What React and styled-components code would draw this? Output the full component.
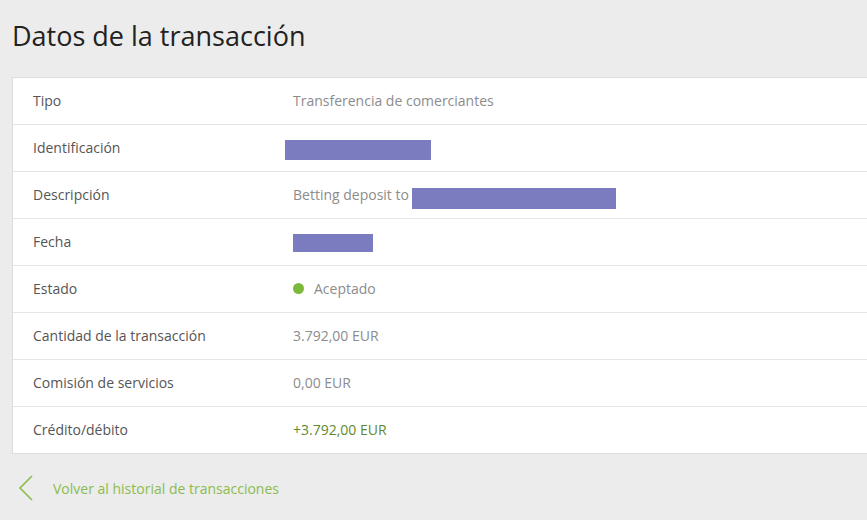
import React from "react";
import styled, { createGlobalStyle } from "styled-components";

const Global = createGlobalStyle`
  html, body { margin: 0; padding: 0; background: #ebeceb; }
  body { font-family: "Open Sans", "Noto Sans", sans-serif; overflow: hidden; }
`;

const Page = styled.div`
  width: 867px;
  height: 520px;
  padding: 0 0 0 12px;
  box-sizing: border-box;
  overflow: hidden;
`;

const Title = styled.h1`
  margin: 0;
  padding: 18px 0 0 0;
  height: 77px;
  box-sizing: border-box;
  font-weight: 400;
  font-size: 27px;
  line-height: 36px;
  color: #222;
`;

const Card = styled.div`
  background: #fff;
  border: 1px solid #dcdddc;
  border-right: none;
  width: 870px;
`;

const Row = styled.div`
  display: grid;
  grid-template-columns: 260px 1fr;
  align-items: center;
  height: 44px;
  padding: 0 0 2px 20px;
  border-top: ${(p) => (p.$first ? "none" : "1px solid #e4e5e6")};
  font-size: 14px;
`;

const Label = styled.div`
  color: #555;
`;

const Value = styled.div`
  display: flex;
  align-items: center;
  color: ${(p) => (p.$green ? "#5e8a2e" : "#8c8c8c")};
`;

const Redact = styled.span`
  display: inline-block;
  background: #7b7bc0;
  width: ${(p) => p.$w}px;
  height: ${(p) => p.$h}px;
  margin-left: ${(p) => p.$ml || 0}px;
  position: relative;
  top: ${(p) => p.$top || 0}px;
`;

const Dot = styled.span`
  width: 11px;
  height: 11px;
  border-radius: 50%;
  background: #7cb93a;
  margin-right: 10px;
`;

const Back = styled.a`
  display: flex;
  align-items: center;
  margin-top: 21px;
  padding-left: 6px;
  color: #8cbc4e;
  font-size: 14px;
  text-decoration: none;
  cursor: pointer;
`;

const Chevron = styled.svg`
  width: 16px;
  height: 26px;
  margin-right: 19px;
`;

const rows = [
  { label: "Tipo", value: "Transferencia de comerciantes" },
  { label: "Identificación", redact: { w: 146, h: 20, ml: -8, top: 3 } },
  { label: "Descripción", value: "Betting deposit to", redact: { w: 204, h: 21, ml: 3, top: 4 } },
  { label: "Fecha", redact: { w: 80, h: 18, top: 2 } },
  { label: "Estado", status: "Aceptado" },
  { label: "Cantidad de la transacción", value: "3.792,00 EUR" },
  { label: "Comisión de servicios", value: "0,00 EUR" },
  { label: "Crédito/débito", value: "+3.792,00 EUR", green: true },
];

export default function App() {
  return (
    <>
      <Global />
      <Page>
        <Title>Datos de la transacción</Title>
        <Card>
          {rows.map((r, i) => (
            <Row key={r.label} $first={i === 0}>
              <Label>{r.label}</Label>
              <Value $green={r.green}>
                {r.status && <Dot />}
                {r.status}
                {r.value}
                {r.redact && (
                  <Redact $w={r.redact.w} $h={r.redact.h} $ml={r.redact.ml} $top={r.redact.top} />
                )}
              </Value>
            </Row>
          ))}
        </Card>
        <Back>
          <Chevron viewBox="0 0 16 26">
            <path d="M14 1 L2 13 L14 25" fill="none" stroke="#8cbc4e" strokeWidth="1.6" />
          </Chevron>
          Volver al historial de transacciones
        </Back>
      </Page>
    </>
  );
}
